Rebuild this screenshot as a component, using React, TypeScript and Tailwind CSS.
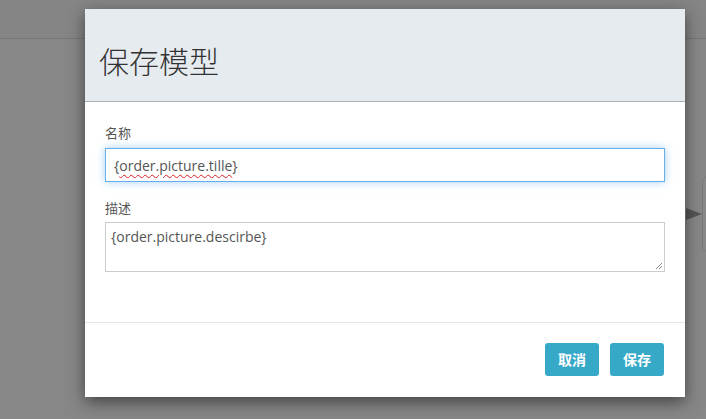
function App() {
  const cjk = { fontFamily: '"Open Sans", "Noto Sans CJK SC", sans-serif' };
  return (
    <div
      className="relative w-[706px] h-[419px] overflow-hidden bg-[#878787]"
      style={cjk}
    >
      {/* page behind the overlay */}
      <div className="h-[39px] border-b border-[#777777] bg-[#858585]" />
      <div className="absolute left-[702px] top-[176px] w-[20px] h-[76px] rounded-[6px] border border-[#7a7a7a] bg-[#888888]" />
      <div className="absolute left-[686px] top-[208px] w-0 h-0 border-y-[6px] border-y-transparent border-l-[16px] border-l-[#555555]" />

      {/* modal */}
      <div className="absolute left-[85px] top-[9px] w-[600px] h-[388px] bg-white shadow-[0_5px_15px_rgba(0,0,0,0.5)] flex flex-col">
        <div className="h-[93px] bg-[#e6ebef] border-b border-[#a9b0b6] px-[14px] pt-[34px]">
          <h1 className="text-[30px] leading-[37px] font-light text-[#333333]">保存模型</h1>
        </div>

        <div className="flex-1 px-[20px] pt-[21px] flex flex-col">
          <label className="text-[13px] leading-[20px] text-[#555555] mb-[5px]">名称</label>
          <div className="h-[34px] border border-[#66afe9] shadow-[0_0_8px_rgba(102,175,233,0.6)] px-[8px] flex items-center text-[14px] text-[#555555]">
            <span>
              {"{"}
              <span className="underline decoration-wavy decoration-[#e02020] decoration-1 underline-offset-[3px]">
                order.picture.tille
              </span>
              {"}"}
            </span>
          </div>

          <label className="text-[13px] leading-[20px] text-[#555555] mt-[16px] mb-[4px]">描述</label>
          <div className="relative h-[50px] border border-[#cccccc] px-[5px] pt-[4px] text-[14px] leading-[20px] text-[#555555]">
            {"{order.picture.descirbe}"}
            <svg className="absolute right-[1px] bottom-[1px]" width="9" height="9" viewBox="0 0 9 9">
              <path d="M8 2 L2 8 M8 5 L5 8" stroke="#888888" strokeWidth="1" />
            </svg>
          </div>
        </div>

        <div className="h-[75px] border-t border-[#e5e5e5] flex justify-end items-start gap-[11px] pt-[20px] pr-[21px]">
          <button className="w-[54px] h-[33px] rounded-[3px] bg-[#37a9c8] text-white text-[14px] font-bold">取消</button>
          <button className="w-[54px] h-[33px] rounded-[3px] bg-[#37a9c8] text-white text-[14px] font-bold">保存</button>
        </div>
      </div>
    </div>
  );
}

export default App;
